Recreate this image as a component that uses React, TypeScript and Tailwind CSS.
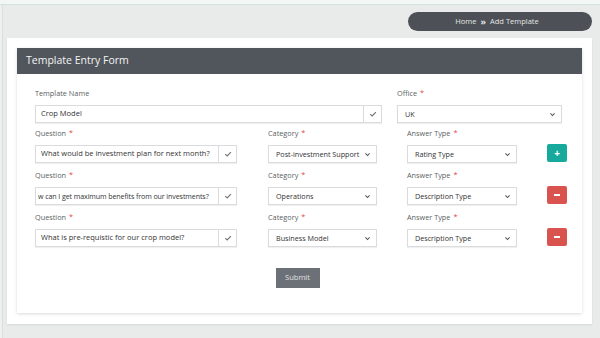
import React from 'react';

const font = { fontFamily: '"Open Sans", "Liberation Sans", sans-serif' };

const Star = () => <span className="text-[#e5474b] ml-[3px]">*</span>;

const Check = () => (
	<svg width="8" height="8" viewBox="0 0 10 10" fill="none">
		<path d="M1.5 5.2 L4 7.5 L8.6 2.6" stroke="#6f7378" strokeWidth="1.4" />
	</svg>
);

const Chevron = () => (
	<svg width="7" height="7" viewBox="0 0 10 10" fill="none">
		<path d="M2 3.5 L5 6.5 L8 3.5" stroke="#555" strokeWidth="1.5" />
	</svg>
);

const Label = ({ text, required = true }: { text: string; required?: boolean }) => (
	<div className="h-[12px] leading-[12px] text-[7.3px] text-[#5b5f63] mb-[6px]">
		{text}
		{required && <Star />}
	</div>
);

const CheckInput = ({ value, width, tight = false }: { value: string; width: string; tight?: boolean }) => (
	<div className={`flex h-[18px] border border-[#d9dbdd] shadow-[0_1px_1px_rgba(0,0,0,0.06)] ${width}`}>
		<div
			className={`flex-1 flex items-center overflow-hidden whitespace-nowrap text-[#333] ${
				tight ? 'pl-[2px] text-[7.1px] tracking-[-0.1px]' : 'pl-[5px] text-[7.5px]'
			}`}
		>
			{value}
		</div>
		<div className="w-[18px] border-l border-[#d9dbdd] flex items-center justify-center">
			<Check />
		</div>
	</div>
);

const Select = ({ value, width }: { value: string; width: string }) => (
	<div className={`flex items-center justify-between h-[18px] border border-[#d9dbdd] shadow-[0_1px_1px_rgba(0,0,0,0.06)] pl-[7px] pr-[5px] text-[7.2px] text-[#333] ${width}`}>
		<span className="whitespace-nowrap">{value}</span>
		<Chevron />
	</div>
);

const questions = [
	{ q: 'What would be investment plan for next month?', c: 'Post-investment Support', a: 'Rating Type', add: true },
	{ q: 'w can I get maximum benefits from our investments?', c: 'Operations', a: 'Description Type', add: false },
	{ q: 'What is pre-requistic for our crop model?', c: 'Business Model', a: 'Description Type', add: false },
];

export default function App() {
	return (
		<div className="w-[600px] h-[338px] bg-[#e9eaea] flex flex-col overflow-hidden" style={font}>
			<div className="h-[5px] bg-[#f4f6f5] border-b border-[#d2e3df]" />
			<div className="flex flex-1">
				<div className="w-[3px] bg-[#eeefef] border-r border-[#dcdddd]" />
				<div className="flex-1 flex flex-col pl-[4px] pr-[8px]">
					<div className="flex justify-end mt-[7px]">
						<div className="w-[184px] h-[19px] rounded-full bg-[#4d5157] flex items-center justify-center text-[7.5px] text-[#e4e5e6] pr-[6px]">
							<span>Home</span>
							<span className="mx-[4px] font-bold text-[9px] leading-none">»</span>
							<span>Add Template</span>
						</div>
					</div>
					<div className="mt-[7px] bg-white h-[286px] shadow-[0_1px_2px_rgba(0,0,0,0.08)] px-[10px] pt-[10px]">
						<div className="bg-white shadow-[0_1px_3px_rgba(0,0,0,0.15)] pb-[25px]">
							<div className="h-[26px] bg-[#51565c] flex items-center pl-[9px] text-[10.5px] text-[#f3f4f5]">
								Template Entry Form
							</div>
							<div className="pt-[13px] pl-[18px]">
								<div className="flex">
									<div className="w-[347px]">
										<Label text="Template Name" required={false} />
										<CheckInput value="Crop Model" width="w-[347px]" />
									</div>
									<div className="ml-[15px]">
										<Label text="Office" />
										<Select value="UK" width="w-[165px]" />
									</div>
								</div>
								{questions.map((row, i) => (
									<div key={i} className={`flex ${i === 0 ? 'mt-[4px]' : 'mt-[6px]'}`}>
										<div className="w-[202px]">
											<Label text="Question" />
											<CheckInput value={row.q} width="w-[202px]" tight={i === 1} />
										</div>
										<div className="ml-[31px]">
											<Label text="Category" />
											<Select value={row.c} width="w-[109px]" />
										</div>
										<div className="ml-[30px]">
											<Label text="Answer Type" />
											<Select value={row.a} width="w-[110px]" />
										</div>
										<div className="ml-[30px] pt-[17px]">
											{row.add ? (
												<div className="w-[20px] h-[18px] rounded-[2px] bg-[#17a99b] flex items-center justify-center text-white text-[10px] font-bold leading-none">
													+
												</div>
											) : (
												<div className="w-[20px] h-[18px] rounded-[2px] bg-[#d9534f] flex items-center justify-center">
													<div className="w-[6px] h-[2px] bg-white" />
												</div>
											)}
										</div>
									</div>
								))}
								<div className="flex justify-center mt-[21px] pr-[22px]">
									<div className="w-[44px] h-[20px] bg-[#6c7077] flex items-center justify-center text-[7.5px] text-[#e1e2e4]">
										Submit
									</div>
								</div>
							</div>
						</div>
					</div>
				</div>
			</div>
		</div>
	);
}
